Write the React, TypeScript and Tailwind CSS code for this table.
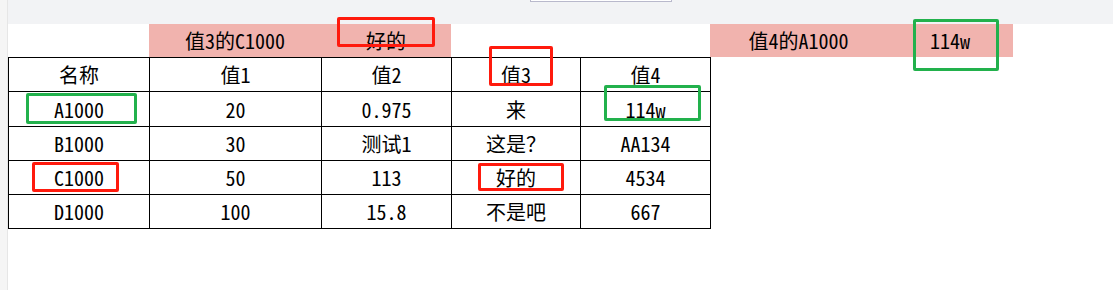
import React from "react";

const cols = ["w-[141px]", "w-[172px]", "w-[130px]", "w-[129px]", "w-[130px]"];

const rows: string[][] = [
    ["名称", "值1", "值2", "值3", "值4"],
    ["A1000", "20", "0.975", "来", "114w"],
    ["B1000", "30", "测试1", "这是？", "AA134"],
    ["C1000", "50", "113", "好的", "4534"],
    ["D1000", "100", "15.8", "不是吧", "667"],
];

// annotation boxes drawn over the sheet
const marks = [
    { c: "left-[337px] top-[17px] w-[98px] h-[30px] border-[#ff1a0d]" },
    { c: "left-[489px] top-[46px] w-[64px] h-[40px] border-[#ff1a0d]" },
    { c: "left-[32px] top-[162px] w-[87px] h-[30px] border-[#ff1a0d]" },
    { c: "left-[478px] top-[163px] w-[86px] h-[28px] border-[#ff1a0d]" },
    { c: "left-[26px] top-[93px] w-[111px] h-[31px] border-[#22b14c]" },
    { c: "left-[604px] top-[85px] w-[97px] h-[36px] border-[#22b14c]" },
    { c: "left-[913px] top-[19px] w-[86px] h-[52px] border-[#22b14c]" },
];

export default function App() {
    return (
        <div
            className="relative flex w-[1113px] h-[290px] bg-white text-black overflow-hidden"
            style={{ fontFamily: '"Noto Sans Mono CJK SC", "Noto Sans CJK SC", sans-serif' }}
        >
            <div className="w-[8px] h-full bg-[#f5f5f5] border-r border-[#e6e6e6]" />
            <div className="flex flex-col flex-1">
                <div className="relative h-[24px] bg-[#f2f3f5]">
                    <div className="absolute left-[522px] top-[-4px] w-[142px] h-[6px] bg-white border border-[#b9b9cc]" />
                </div>
                <div className="flex h-[33px] text-[20px] leading-none">
                    <div className="w-[141px]" />
                    <div className="flex bg-[#f1b3ae]">
                        <div className="w-[172px] flex items-center justify-center pt-[1px]">值3的C1000</div>
                        <div className="w-[130px] flex items-center justify-center pt-[1px]">好的</div>
                    </div>
                    <div className="w-[259px]" />
                    <div className="flex bg-[#f1b3ae]">
                        <div className="w-[177px] flex items-center justify-center pt-[1px]">值4的A1000</div>
                        <div className="w-[126px] flex items-center justify-center pt-[1px]">114w</div>
                    </div>
                </div>
                <div className="flex flex-col w-[703px] border-l border-t border-black text-[20px] leading-none">
                    {rows.map((r, i) => (
                        <div key={i} className={`flex ${i === 1 ? "h-[35px]" : "h-[34px]"}`}>
                            {r.map((v, j) => (
                                <div
                                    key={j}
                                    className={`${cols[j]} flex items-center justify-center pt-[1px] border-r border-b border-black`}
                                >
                                    {v}
                                </div>
                            ))}
                        </div>
                    ))}
                </div>
            </div>
            {marks.map((m, i) => (
                <div key={i} className={`absolute border-[3px] rounded-[2px] ${m.c}`} />
            ))}
        </div>
    );
}
